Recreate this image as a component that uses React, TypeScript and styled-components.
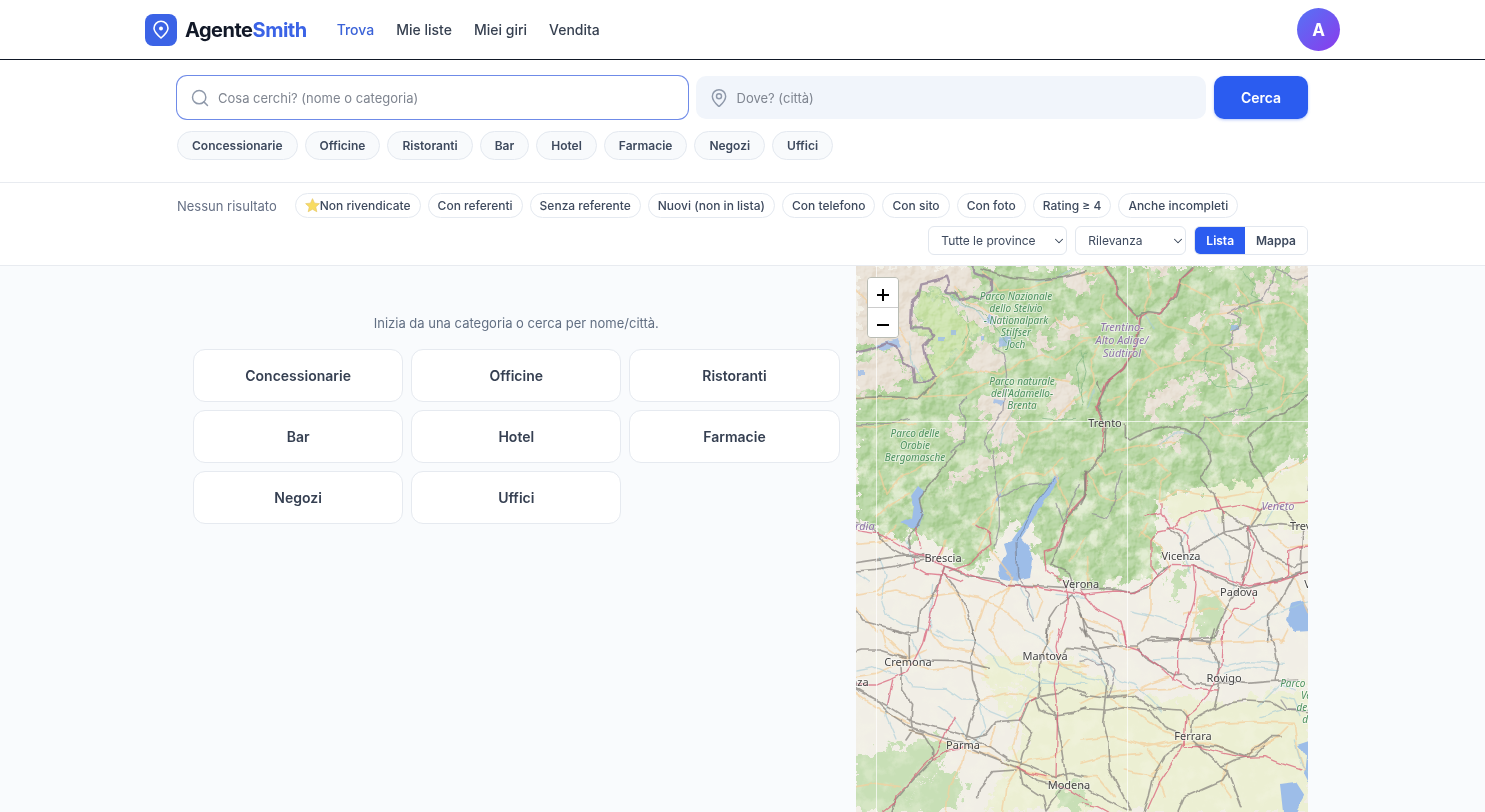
import React from "react";
import styled, { createGlobalStyle, css } from "styled-components";
import { ChevronDown, MapPin, Search } from "lucide-react";

const GlobalStyle = createGlobalStyle`
  *, *::before, *::after { box-sizing: border-box; }
  body {
    margin: 0;
    background: #f9fbfd;
    color: #334155;
    font-family: Inter, "Liberation Sans", sans-serif;
    font-size: 14px;
  }
  button, input, select { font: inherit; color: inherit; }
  button { cursor: pointer; }
`;

const Page = styled.div`
  display: flex;
  flex-direction: column;
  min-height: 100vh;
`;

const Header = styled.header`
  background: #fff;
  border-bottom: 1px solid #111827;
`;

const HeaderInner = styled.div`
  display: flex;
  align-items: center;
  max-width: 1195px;
  height: 59px;
  margin: 0 auto;
`;

const Brand = styled.a`
  display: flex;
  align-items: center;
  gap: 8px;
  margin-right: 30px;
  color: #111827;
  font-size: 20px;
  font-weight: 700;
  letter-spacing: -0.5px;
  text-decoration: none;
`;

const BrandMark = styled.span`
  display: grid;
  place-items: center;
  width: 32px;
  height: 32px;
  border-radius: 8px;
  background: #3b63e6;
  color: #fff;
`;

const BrandAccent = styled.span`
  color: #3b63e6;
`;

const Nav = styled.nav`
  display: flex;
  gap: 22px;
  flex: 1;
`;

const NavLink = styled.a<{ $active?: boolean }>`
  color: ${(p) => (p.$active ? "#3b63d8" : "#374151")};
  font-size: 14px;
  font-weight: 500;
  text-decoration: none;
`;

const Avatar = styled.button`
  width: 43px;
  height: 43px;
  padding: 0;
  border: 0;
  border-radius: 50%;
  background: linear-gradient(135deg, #5573f5, #8b3bec);
  color: #fff;
  font-size: 17px;
  font-weight: 700;
`;

const Section = styled.section`
  background: #fff;
  border-bottom: 1px solid #e8ebf0;
`;

const container = css`
  width: 100%;
  max-width: 1195px;
  margin: 0 auto;
  padding-left: 32px;
  padding-right: 32px;
`;

const SearchInner = styled.div`
  ${container}
  padding-top: 16px;
  padding-bottom: 22px;
`;

const SearchForm = styled.form`
  display: flex;
  gap: 8px;
`;

const Field = styled.label<{ $focused?: boolean }>`
  display: flex;
  flex: 1;
  align-items: center;
  gap: 8px;
  height: 43px;
  padding: 0 13px;
  border-radius: 10px;
  background: ${(p) => (p.$focused ? "#fff" : "#f1f5fb")};
  color: #8f99aa;
  box-shadow: ${(p) => (p.$focused ? "0 0 0 1px #6f8be8" : "none")};
`;

const FieldInput = styled.input`
  flex: 1;
  min-width: 0;
  padding: 0;
  border: 0;
  outline: 0;
  background: transparent;
  color: #334155;
  font-size: 13px;
  &::placeholder { color: #7f8590; opacity: 1; }
`;

const SearchButton = styled.button`
  width: 94px;
  height: 43px;
  border: 0;
  border-radius: 10px;
  background: #2b5cf0;
  color: #fff;
  font-size: 14px;
  font-weight: 600;
  box-shadow: 0 1px 3px rgba(43, 92, 240, 0.35);
`;

const CategoryChips = styled.div`
  display: flex;
  flex-wrap: wrap;
  gap: 7px;
  margin-top: 12px;
`;

const CategoryChip = styled.button`
  height: 29px;
  padding: 0 14px;
  border: 1px solid #e4e9f0;
  border-radius: 15px;
  background: #f8fafc;
  color: #3e4a5e;
  font-size: 12px;
  font-weight: 600;
`;

const FilterInner = styled.div`
  ${container}
  display: flex;
  flex-wrap: wrap;
  align-items: center;
  gap: 8px 18px;
  padding-top: 10px;
  padding-bottom: 10px;
`;

const ResultCount = styled.span`
  color: #667085;
  font-size: 13px;
`;

const FilterChips = styled.div`
  display: flex;
  flex-wrap: wrap;
  gap: 7px;
`;

const FilterChip = styled.button`
  display: flex;
  align-items: center;
  height: 25px;
  padding: 0 9px;
  border: 1px solid #e4e9f0;
  border-radius: 13px;
  background: #fff;
  color: #3e4a5e;
  font-size: 12px;
  font-weight: 500;
`;

const Controls = styled.div`
  display: flex;
  gap: 8px;
  margin-left: auto;
`;

const SelectWrap = styled.span<{ $wide?: boolean }>`
  position: relative;
  width: ${(p) => (p.$wide ? "139px" : "111px")};
  svg {
    position: absolute;
    top: 8px;
    right: 1px;
    pointer-events: none;
  }
`;

const Select = styled.select`
  width: 100%;
  height: 29px;
  padding: 0 12px;
  border: 1px solid #e2e7ee;
  border-radius: 6px;
  background: #fff;
  color: #3e4a5e;
  font-size: 12px;
  appearance: none;
`;

const Toggle = styled.div`
  display: flex;
  height: 29px;
  overflow: hidden;
  border: 1px solid #e2e7ee;
  border-radius: 6px;
`;

const ToggleButton = styled.button<{ $active?: boolean }>`
  padding: 0 11px;
  border: 0;
  background: ${(p) => (p.$active ? "#2b5cf0" : "#fff")};
  color: ${(p) => (p.$active ? "#fff" : "#3e4a5e")};
  font-size: 12px;
  font-weight: 600;
`;

const Main = styled.main`
  ${container}
  display: grid;
  grid-template-columns: 3fr 2fr;
  flex: 1;
`;

const Results = styled.section`
  padding: 48px 16px 32px;
`;

const Hint = styled.p`
  margin: 0 0 16px;
  color: #626f83;
  font-size: 13px;
  line-height: 19px;
  text-align: center;
`;

const CardGrid = styled.div`
  display: grid;
  grid-template-columns: repeat(3, 1fr);
  gap: 8px;
`;

const Card = styled.button`
  height: 53px;
  border: 1px solid #e6eaf0;
  border-radius: 12px;
  background: #fff;
  color: #364052;
  font-size: 14px;
  font-weight: 600;
`;

const MapPanel = styled.section`
  position: relative;
  overflow: hidden;
  background: #f2efe9;
`;

const MapDrawing = styled.svg`
  position: absolute;
  inset: 0;
  width: 100%;
  height: 100%;
`;

const Relief = styled.g`
  mix-blend-mode: soft-light;
  opacity: 0.32;
`;

const ZoomControl = styled.div`
  position: absolute;
  top: 11px;
  left: 11px;
  display: flex;
  flex-direction: column;
  overflow: hidden;
  border: 1px solid #b9bcb4;
  border-radius: 4px;
`;

const ZoomButton = styled.button`
  display: grid;
  place-items: center;
  width: 30px;
  height: 29px;
  padding: 4px 0 0;
  border: 0;
  background: #fff;
  color: #000;
  & + & { height: 30px; border-top: 1px solid #ccc; }
`;

const MapText = styled.text<{ $kind: "city" | "park" | "region" }>`
  font-family: "Noto Sans", "Open Sans", sans-serif;
  font-size: ${(p) => (p.$kind === "park" ? "10px" : "11px")};
  font-style: ${(p) => (p.$kind === "city" ? "normal" : "italic")};
  fill: ${(p) => (p.$kind === "city" ? "#444" : p.$kind === "park" ? "#4d9160" : "#8f76a8")};
  stroke: rgba(255, 255, 255, 0.5);
  stroke-width: 2px;
  paint-order: stroke;
  text-anchor: middle;
`;

const categories = ["Concessionarie", "Officine", "Ristoranti", "Bar", "Hotel", "Farmacie", "Negozi", "Uffici"];
const filters = ["Non rivendicate", "Con referenti", "Senza referente", "Nuovi (non in lista)", "Con telefono", "Con sito", "Con foto", "Rating ≥ 4", "Anche incompleti"];

type Kind = "border" | "rail" | "motorway" | "road" | "river" | "admin" | "park";
const strokes: Record<Kind, { color: string; width: number; opacity: number }> = {
  border: { color: "#95829a", width: 7, opacity: 0.8 },
  rail: { color: "#85807c", width: 5, opacity: 0.7 },
  motorway: { color: "#d9657c", width: 4, opacity: 0.75 },
  road: { color: "#f3cf9c", width: 5, opacity: 0.7 },
  river: { color: "#a9cdd8", width: 4, opacity: 0.6 },
  admin: { color: "#938e98", width: 4, opacity: 0.7 },
  park: { color: "#7fb585", width: 3, opacity: 0.7 },
};

interface Sheet {
  x: number;
  y: number;
  lines: [Kind, string][];
}

/* Each sheet is drawn at three times its size on the map. */
const sheets: Sheet[] = [
  {
    x: 0, y: -1,
    lines: [
      ["road", "M215 385L235 345 300 285 325 255 335 215 330 180M290 335L370 315 440 330 495 290 560 270 600 285 690 225M0 395L90 405 200 395 330 390 420 340"],
      ["road", "M500 560L520 510 570 490 620 435 690 380M0 75L70 150 130 190 160 240M380 20L430 80 520 70 600 40M560 370L590 340 640 350M440 480L480 430 540 420"],
      ["road", "M300 65L330 110 380 130 410 150M0 480L60 490 120 470 180 480M600 160L640 190 690 175"],
      ["park", "M270 80L330 120 380 145 430 200 470 250M320 240L340 200 330 150M560 460L600 465 660 460M690 260L660 300 665 350 680 420"],
      ["river", "M270 75L310 115 360 135 390 175M160 230L170 300 200 340M430 540L440 490 470 440M640 20L600 40 540 50"],
      ["border", "M0 262L45 252 95 232 125 245 142 290 170 310 175 352 215 350 240 330 210 280 203 242 235 212 215 190 165 190 168 110 188 92 196 55 245 45 270 35 278 60 270 80 300 85 310 105 345 95 375 100 405 80 405 45 378 30 355 20 352 0"],
      ["rail", "M375 10L430 28 470 40 550 45 620 38 690 20M0 398L110 395 190 402 235 355"],
      ["admin", "M418 250L445 270 455 330 445 390 440 440 405 490 385 530 400 560M330 395L310 420 330 470 325 530 285 560M0 480L100 475 160 460"],
    ],
  },
  {
    x: 225, y: -1,
    lines: [
      ["road", "M200 20L210 80 190 140M290 50L350 80 390 105M70 90L60 130 90 160M110 420L170 350 240 310 330 285 390 235 360 190 390 150 430 145 490 135M230 160L260 185 320 200 370 210M390 240L440 240 520 240M530 130L545 190 535 250 560 310 610 340 600 400"],
      ["road", "M190 255L240 310M330 285L390 290 430 300 440 360 450 400M430 120L530 120 600 110 640 130 680 180M0 220L60 215 100 240M20 400L40 350 30 280 60 230M370 450L430 510 490 515M460 60L500 100 520 150M560 440L600 420 680 330"],
      ["road", "M100 560L200 540 280 530M0 30L60 20 80 0M80 405L120 395"],
      ["park", "M490 20L520 60 510 90 550 110M380 260L370 320 400 360 480 370 560 355M600 390L690 380M430 450L480 450 560 430M0 260L15 320 0 390"],
      ["river", "M190 150L220 190M40 370L20 430M230 540L290 500 340 510"],
      ["admin", "M585 0L575 50 545 105 480 125 440 145 480 160 475 190 455 200 450 235 415 250 450 275 455 310 500 340 515 390 490 430 430 445 375 460 370 490 350 510 390 560M590 10L650 45 690 30"],
      ["rail", "M72 0L105 50 110 90 170 155 185 145M335 5L300 40 285 90 240 145 200 140 180 150 170 230 130 310 80 350 50 425 75 480 70 560M50 350L60 380M130 480L130 515 150 525 200 500 260 485 310 492 360 520M690 385L610 445 580 450 540 480 500 520 515 560"],
      ["motorway", "M68 0L102 50 106 90 170 160M338 8L295 45 280 90 235 148 200 145 176 160 166 235 125 315 75 355 47 425 70 480 60 560"],
    ],
  },
  {
    x: 0, y: 185,
    lines: [
      ["road", "M70 60L90 130 130 80 180 60 210 40M0 280L60 275 120 265M60 200L100 160 160 130M350 220L400 170 420 140 460 90 500 65 560 70 600 40 620 20M270 270L250 330M510 540L450 480 370 440 300 425 200 440 120 420 60 430M530 400L560 450 540 500M400 540L470 380 400 290M270 390L310 440 340 540M120 220L70 280"],
      ["road", "M0 430L60 420 100 390 150 370M590 50L620 130 650 190M0 470L60 540M420 150L400 230 370 300M360 540L390 450 470 400M690 260L640 330"],
      ["river", "M70 320L90 370 75 440 90 490 140 520 200 530 260 560M480 390L500 430 520 450 535 510M150 270L170 330M230 400L220 540M690 440L600 430M0 360L40 390"],
      ["admin", "M410 0L415 50 420 120 430 140 460 125 500 105 590 95M430 140L430 230 415 285M480 275L485 380 520 430 515 480 535 510M670 100L640 170 620 210 600 160"],
      ["rail", "M300 0L260 50 230 90 190 140 200 190 180 230 155 260 160 295M0 215L50 230 100 290 150 315 210 318M0 335L100 320 200 310M0 360L60 355 120 345 200 325M690 60L685 140 630 200 610 280 585 340 640 365 655 420M265 345L340 375 380 380 420 385 450 400 560 405 630 410M265 350L240 420 190 480 185 540 150 545 20 510 0 475M265 370L310 430 330 470 360 570M650 430L600 470 580 500 570 570M650 430L680 500 690 560"],
      ["motorway", "M0 235L60 245 110 270 160 300 210 318 240 335 310 360 380 385 450 400 540 408 690 432M175 320L175 350 210 370 260 375M265 345L250 400 225 490 205 570M690 65L690 130 635 190 600 290 565 300 570 360 620 390 635 430 630 500 610 560M255 360L270 375 310 390 320 385M360 220L400 245 405 280 380 300 340 340 280 360M260 290L240 330M180 230L195 290"],
    ],
  },
  {
    x: 225, y: 185,
    lines: [
      ["road", "M20 60L60 140 100 150 150 120 190 130M235 150L240 90 270 65M235 150L290 120 420 140 540 120 600 60 690 20M0 30L40 20 70 70 100 60M130 40L190 40 220 20 260 60M170 260L200 220M360 380L470 510 550 540M560 330L580 370 560 410 610 470M210 370L210 480 180 540M430 340L500 330 540 380M20 320L20 400M560 240L620 290 690 280M510 220L550 120"],
      ["road", "M690 500L640 380 590 330M310 490L410 470M0 500L60 520 130 550M270 360L240 290 180 240M410 420L350 440 330 570"],
      ["river", "M370 190L400 250 440 300 460 410M330 210L300 280 330 370M470 560L540 500 690 450M150 480L240 500 310 530M320 310L400 350M580 170L550 220M560 570L560 510"],
      ["admin", "M120 60L100 150 80 205 30 190M690 60L680 120"],
      ["rail", "M65 0L45 40 10 70 15 130 0 160M385 0L390 30 360 80 400 130 410 170 500 230 515 240 550 300 640 350M505 0L510 30 550 80 580 150 640 210M325 300L370 275 430 240 500 228 600 218 660 225M425 180L430 245 505 295 480 410M550 170L500 240 505 295M0 415L50 412 100 415 150 425 200 410 240 360 260 345M340 345L410 380 460 400 500 412 560 395 640 375 690 360M500 412L660 365 665 240M640 350L650 340 690 335M470 420L430 480 400 560 200 568M260 230L300 260 310 320M0 490L20 530 90 550 110 570M640 375L600 450 560 490 560 570M0 530L20 560"],
      ["motorway", "M0 430L100 420 160 425 240 370 270 343 340 345 400 370 500 405 600 390 690 360M195 195L240 185 270 230 320 250 325 300M230 375L210 350 210 270 230 240 280 230 300 205 360 180 420 170 480 160 540 180 600 155 690 150M240 155L240 185M340 345L345 400 340 450 300 570M405 140L430 190M500 230L520 270 500 360 480 400M600 390L620 370 620 300 650 288 690 285M510 415L520 455 490 475 460 475 430 520 420 570M0 420L40 470 120 510 135 570"],
    ],
  },
  {
    x: 0, y: 364,
    lines: [
      ["road", "M0 140L60 130 130 100 210 60M70 0L150 80 160 100M400 0L430 50 460 100 520 100M160 100L230 120 320 110 400 140M330 350L320 400 280 470 270 546M420 290L400 350 350 350 320 320M490 280L470 350 490 410 450 470 440 546M0 190L70 240 160 280M370 210L450 190 540 200M610 90L640 120 690 130M480 410L520 390 600 380 640 330M500 420L570 440 620 440M80 0L90 50 150 90"],
      ["road", "M160 300L230 320 320 360 390 370 490 420 600 455M0 470L60 460 130 470M590 0L560 70 580 100 690 110M220 0L260 50 350 65 390 120"],
      ["river", "M0 120L50 110 90 125 150 140 170 170 230 175 270 175 320 210 365 212 400 245 450 265 490 240 520 190M100 190L90 260 120 330M240 0L290 30 360 35 410 80 430 110 490 130 560 160 690 160M510 0L550 20 580 60 620 110 690 140M170 30L200 100M520 190L560 150 600 160M250 230L290 260 330 320M370 215L390 300 350 340"],
      ["rail", "M160 90L160 15 110 0M0 65L20 60 70 60 150 85M200 90L310 92 400 115M350 0L360 40 345 80 350 150 370 205 340 280 330 330M135 110L140 180 170 220 165 270 170 300 150 330M0 175L50 205 100 230 170 275 270 300 340 320 400 350 460 390 520 408 600 443M0 180L60 210 100 250 160 290 230 315 320 340 400 380 490 415 540 450 600 463M160 300L200 310 230 360 230 390 180 440 145 480 115 515 105 546M330 330L390 315 420 275 495 270 520 210 550 200 600 255 620 360 633 450M575 0L570 50 550 100 550 200 610 190 640 170 690 190M490 270L530 310 500 370 490 410 500 460 560 500 570 540 600 500 620 470M365 500L370 475 410 425 480 420M600 443L640 430 690 440M610 80L630 55 690 60M540 210L550 240 600 258 650 250 690 230"],
      ["motorway", "M210 0L200 40 175 90 150 125 100 150 60 165 0 165M110 150L95 220M300 262L270 300 240 370 200 410 150 470 120 500 115 520 80 546M610 0L600 50 610 100 595 160 605 250 600 440M600 465L640 480 690 510M480 410L520 430 570 440M230 390L270 365 320 355M490 270L510 220 540 200"],
    ],
  },
  {
    x: 225, y: 364,
    lines: [
      ["road", "M0 220L60 190 130 180 280 175 310 170M340 40L500 35 610 30M0 330L100 320 200 350 290 330M340 290L420 280 520 275 640 280M90 210L170 250 240 300 300 320M0 400L70 380 180 370M200 360L240 410 210 430M180 340L250 350 300 330M500 380L520 350 600 320M640 280L650 360 670 420M130 200L210 160 270 140M0 100L20 110"],
      ["road", "M10 440L50 440 100 500M300 340L390 340 460 370M440 400L420 460 450 500M330 290L310 240M130 420L230 440 250 500M500 370L580 330 620 290M70 40L140 60 170 50M620 0L600 40"],
      ["river", "M0 75L30 90 70 110 80 140M30 60L90 110 110 150 160 165 210 210 240 245M0 140L60 150 80 180M170 60L210 90 310 85 380 90 440 110 500 95 610 100M530 230L580 180 600 160 640 180M110 0L120 40M600 200L640 210 660 260M430 130L500 110 590 120M640 330L660 400 690 440M540 260L600 240"],
      ["rail", "M10 0L50 60 80 135 65 280 80 340 85 420 150 540M0 50L50 58 120 48 170 48 210 20 320 28 390 35M170 55L190 80 240 110 280 135 310 130 340 160 400 165 430 155 500 160 560 155 650 150M400 0L385 45 410 100 415 165 400 235 335 270 330 310M0 195L80 205 160 200 220 235 300 240 320 265M0 235L80 240 130 230 210 240 250 290 300 310M80 200L140 195M300 340L250 380 220 430 205 500 190 546M330 330L440 425 480 530M340 345L410 350 490 380 530 350 570 320 600 320M440 425L425 450 310 500 290 546M400 240L450 215 500 210 570 215 610 240 690 245M0 460L40 490 140 540M440 420L420 410 460 390 520 375 550 345M560 0L580 40 590 100 580 150"],
      ["admin", "M80 205L105 120 80 100 50 105 20 90 0 95M600 210L620 240 650 240"],
      ["motorway", "M130 0L135 50 170 60 230 105 280 150 330 175 410 180M305 0L290 70 290 130M425 0L420 110 385 190 340 240 315 260 310 330 300 360 240 450 200 540M310 330L310 350 350 350 430 370 490 382 550 380 600 400 660 420M0 518L50 530 80 546M275 150L285 125"],
    ],
  },
];

const mountains =
  "M0 0H454V190L430 196 405 215 365 222 330 225 305 232 300 250 298 270 306 300 290 312 250 318 225 322 200 308 180 290 178 262 160 255 148 268 128 300 100 302 88 282 70 270 40 272 0 250Z";
const clearings = [
  "M0 0H110L125 22 110 30 90 22 62 25 58 62 72 72 70 100 55 112 45 90 20 82 0 72Z",
  "M0 95L35 84 48 100 54 112 30 125 0 130Z",
  "M80 25L120 38 145 50 140 65 115 55Z",
  "M120 72L140 80 148 100 130 106 110 102 118 90Z",
  "M128 130L150 122 155 150 170 175 150 172 140 190 130 150 118 142Z",
  "M195 60L215 48 230 62 215 76 200 70Z",
  "M200 120L215 106 222 125 212 145 200 150 190 140Z",
  "M205 10L225 2 230 22 218 30Z",
  "M168 73L195 70 198 83 178 86Z",
  "M93 155L105 150 108 178 96 172Z",
  "M120 195L150 186 158 178 160 187 145 200 118 208 100 215 92 222 98 208 112 205Z",
  "M295 0L318 0 312 10 298 8Z",
  "M290 135L310 120 330 112 352 102 360 110 335 120 322 132 342 128 340 142 325 148 328 132 305 140 300 155 288 152Z",
  "M320 80L335 73 334 85 320 96 316 84Z",
  "M332 52L348 45 350 60 338 68Z",
  "M395 15L415 8 425 20 418 36 405 32Z",
  "M365 40L380 30 388 42 375 56 363 48Z",
  "M376 60L392 58 388 80 368 82 378 70Z",
  "M375 95L395 98 400 112 385 120 370 108Z",
  "M408 80L420 70 418 92 410 90Z",
  "M428 0L454 0 454 20 438 22 432 14Z",
  "M308 170L322 165 325 178 310 185Z",
  "M225 20L240 8 236 30Z",
  "M375 145L390 150 385 160 375 155Z",
];
const woods = [
  "M0 490L30 482 60 478 85 470 98 480 80 505 60 520 50 546 0 546Z",
  "M315 305L330 300 332 320 318 335 310 325Z",
  "M342 330L365 332 368 350 360 370 342 372Z",
  "M200 525L225 515 230 540 205 546Z",
  "M60 520L90 500 110 515 100 546 50 546Z",
];
const greenFields = [
  "M130 420L160 430 180 395 210 390 240 412 270 425 310 435 345 430 370 440 410 425 454 420V546H130L150 500 170 470Z",
  "M305 232L360 222 405 215 454 190V270L400 255 350 250 320 262Z",
  "M125 396L150 388 172 400 165 420 145 425 128 412Z",
];
const lakes = [
  "M200 208L203 212 198 222 188 235 177 255 165 272 172 280 177 294 174 312 160 315 144 312 143 300 150 288 147 278 156 274 166 260 180 238Z",
  "M62 220L68 225 63 235 68 248 62 262 54 262 44 257 56 252 58 240 55 230Z",
  "M435 337L447 334 454 345V365L438 366 430 355Z",
  "M424 518L440 516 449 530 440 546H427Z",
  "M442 479L454 475V520L448 508 450 490Z",
  "M144 224L146 221 144 233 138 238Z",
];
const pools = "M20 78l22-6 4 8-20 5zM142 72l12-4 2 10-12 2zM83 71h5v4h-5zM95 64h6v5h-6zM124 70h4v4h-4zM2 104h6v6h-6zM132 48l5 3-2 7-6-3zM137 132l12 2-4 5-9-3zM375 60h9v4h-9z";

const labels: { kind: "city" | "park" | "region"; x: number; y: number; lines: string[]; step?: number }[] = [
  { kind: "park", x: 160, y: 34, lines: ["Parco Nazionale", "dello Stelvio", "- Nationalpark", "Stilfser", "Joch"] },
  { kind: "park", x: 166, y: 119, lines: ["Parco naturale", "dell'Adamello-", "Brenta"] },
  { kind: "park", x: 59, y: 171, lines: ["Parco delle", "Orobie", "Bergomasche"] },
  { kind: "park", x: 460, y: 421, lines: ["Parco Regionale", "Veneto", "del Delta", "del Po"] },
  { kind: "region", x: 266, y: 65, lines: ["Trentino-", "Alto Adige/", "Südtirol"], step: 13 },
  { kind: "region", x: 422, y: 244, lines: ["Veneto"] },
  { kind: "region", x: -8, y: 264, lines: ["Lombardia"] },
  { kind: "city", x: 249, y: 161, lines: ["Trento"] },
  { kind: "city", x: 87, y: 296, lines: ["Brescia"] },
  { kind: "city", x: 225, y: 322, lines: ["Verona"] },
  { kind: "city", x: 325, y: 294, lines: ["Vicenza"] },
  { kind: "city", x: 383, y: 330, lines: ["Padova"] },
  { kind: "city", x: 452, y: 264, lines: ["Treviso"] },
  { kind: "city", x: 468, y: 322, lines: ["Venezia"] },
  { kind: "city", x: 52, y: 400, lines: ["Cremona"] },
  { kind: "city", x: 189, y: 394, lines: ["Mantova"] },
  { kind: "city", x: 368, y: 416, lines: ["Rovigo"] },
  { kind: "city", x: -10, y: 420, lines: ["Piacenza"] },
  { kind: "city", x: 107, y: 483, lines: ["Parma"] },
  { kind: "city", x: 337, y: 474, lines: ["Ferrara"] },
  { kind: "city", x: 213, y: 523, lines: ["Modena"] },
];

function AreaMap() {
  return (
    <MapDrawing viewBox="0 0 454 546" preserveAspectRatio="xMinYMin slice" role="img" aria-label="Mappa del Nord Italia">
      <defs>
        <filter id="ragged" x="-5%" y="-5%" width="110%" height="110%">
          <feTurbulence type="fractalNoise" baseFrequency="0.1" numOctaves="4" seed="4" />
          <feDisplacementMap in="SourceGraphic" scale="26" xChannelSelector="R" yChannelSelector="G" />
          <feGaussianBlur stdDeviation="0.6" />
        </filter>
        <filter id="jitter" x="-5%" y="-5%" width="110%" height="110%">
          <feTurbulence type="fractalNoise" baseFrequency="0.07" numOctaves="2" seed="9" />
          <feDisplacementMap in="SourceGraphic" scale="5" xChannelSelector="R" yChannelSelector="G" />
          <feGaussianBlur stdDeviation="0.3" />
        </filter>
        <filter id="valleys" x="0" y="0" width="100%" height="100%">
          <feTurbulence type="fractalNoise" baseFrequency="0.06" numOctaves="5" seed="12" />
          <feColorMatrix values="0 0 0 0 0.92  0 0 0 0 0.93  0 0 0 0 0.80  4 0 0 0 -1.9" />
          <feComposite in2="SourceGraphic" operator="in" />
        </filter>
        <filter id="relief" x="0" y="0" width="100%" height="100%" colorInterpolationFilters="sRGB">
          <feTurbulence type="fractalNoise" baseFrequency="0.07" numOctaves="4" seed="21" />
          <feDiffuseLighting surfaceScale="7" lightingColor="#ffffff" result="light">
            <feDistantLight azimuth="225" elevation="40" />
          </feDiffuseLighting>
          <feComposite in2="SourceGraphic" operator="in" />
        </filter>
      </defs>
      <rect width="454" height="546" fill="#f1eee6" />
      <g filter="url(#ragged)">
        {greenFields.map((d) => <path key={d} d={d} fill="#ecefd3" />)}
        <path d={mountains} fill="#b6d5a2" />
        {woods.map((d) => <path key={d} d={d} fill="#c8dfb6" />)}
      </g>
      <path d={mountains} filter="url(#valleys)" opacity="0.5" />
      <rect y="200" width="454" height="346" filter="url(#valleys)" opacity="0.3" />
      <g filter="url(#ragged)">
        {clearings.map((d) => <path key={d} d={d} fill="#e9e1d6" />)}
        <path d="M62 28L78 28 100 45 125 62 110 78 95 90 80 115 60 112 72 90 76 72 62 62Z" fill="#cde3ae" />
      </g>
      <Relief>
        <path d={mountains} filter="url(#relief)" />
      </Relief>
      <g filter="url(#jitter)" fill="#9dbde8">
        {lakes.map((d) => <path key={d} d={d} />)}
        <path d={pools} opacity="0.8" />
      </g>
      <g fill="none" strokeLinejoin="round" strokeLinecap="round" filter="url(#jitter)">
        {sheets.map((s) => (
          <g key={`${s.x}-${s.y}`} transform={`translate(${s.x} ${s.y}) scale(0.3333)`}>
            {s.lines.map(([kind, d]) => (
              <path key={d} d={d} stroke={strokes[kind].color} strokeWidth={strokes[kind].width} opacity={strokes[kind].opacity} />
            ))}
          </g>
        ))}
        <path d="M199 212L178 240 161 277 162 312" stroke="#7b93b3" />
      </g>
      <path d="M20.500 0V546M271.500 0V546M0 155.500H454" stroke="#fff" opacity="0.7" fill="none" />
      {labels.map((l) => (
        <MapText key={l.lines[0] + l.x} $kind={l.kind}>
          {l.lines.map((line, i) => (
            <tspan key={line} x={l.x} y={l.y + i * (l.step ?? 12)}>{line}</tspan>
          ))}
        </MapText>
      ))}
    </MapDrawing>
  );
}

const StarIcon = () => (
  <svg width="15" height="15" viewBox="0 0 24 24" aria-hidden="true">
    <path d="M12 1l3.200 7.200 7.800.8-5.800 5.300 1.700 7.700L12 18l-6.900 4 1.700-7.700L1 9l7.800-.8z" fill="#f8dc62" stroke="#e6c662" strokeLinejoin="round" />
  </svg>
);

const BrandPin = () => (
  <svg width="18" height="20" viewBox="0 0 18 20" fill="none" aria-hidden="true">
    <path d="M9 18C6 15.500 2 11.800 2 8.300a7 7 0 0 1 14 0C16 11.800 12 15.500 9 18z" stroke="#fff" strokeWidth="1.600" />
    <circle cx="9" cy="8.500" r="2" fill="#fff" />
  </svg>
);

export default function App() {
  return (
    <Page>
      <GlobalStyle />
      <Header>
        <HeaderInner>
          <Brand href="#">
            <BrandMark><BrandPin /></BrandMark>
            <span>Agente<BrandAccent>Smith</BrandAccent></span>
          </Brand>
          <Nav>
            <NavLink href="#trova" $active>Trova</NavLink>
            <NavLink href="#liste">Mie liste</NavLink>
            <NavLink href="#giri">Miei giri</NavLink>
            <NavLink href="#vendita">Vendita</NavLink>
          </Nav>
          <Avatar type="button">A</Avatar>
        </HeaderInner>
      </Header>

      <Section>
        <SearchInner>
          <SearchForm onSubmit={(e) => e.preventDefault()}>
            <Field $focused>
              <Search size={20} strokeWidth={1.75} aria-hidden />
              <FieldInput aria-label="Cosa cerchi?" placeholder="Cosa cerchi? (nome o categoria)" />
            </Field>
            <Field>
              <MapPin size={20} strokeWidth={1.75} aria-hidden />
              <FieldInput aria-label="Dove?" placeholder="Dove? (città)" />
            </Field>
            <SearchButton type="submit">Cerca</SearchButton>
          </SearchForm>
          <CategoryChips>
            {categories.map((c) => <CategoryChip key={c} type="button">{c}</CategoryChip>)}
          </CategoryChips>
        </SearchInner>
      </Section>

      <Section>
        <FilterInner>
          <ResultCount>Nessun risultato</ResultCount>
          <FilterChips>
            {filters.map((f, i) => (
              <FilterChip key={f} type="button">{i === 0 && <StarIcon />}{f}</FilterChip>
            ))}
          </FilterChips>
          <Controls>
            <SelectWrap $wide>
              <Select aria-label="Provincia"><option>Tutte le province</option></Select>
              <ChevronDown size={14} strokeWidth={1.75} aria-hidden />
            </SelectWrap>
            <SelectWrap>
              <Select aria-label="Ordinamento"><option>Rilevanza</option></Select>
              <ChevronDown size={14} strokeWidth={1.75} aria-hidden />
            </SelectWrap>
            <Toggle>
              <ToggleButton type="button" $active>Lista</ToggleButton>
              <ToggleButton type="button">Mappa</ToggleButton>
            </Toggle>
          </Controls>
        </FilterInner>
      </Section>

      <Main>
        <Results>
          <Hint>Inizia da una categoria o cerca per nome/città.</Hint>
          <CardGrid>
            {categories.map((c) => <Card key={c} type="button">{c}</Card>)}
          </CardGrid>
        </Results>
        <MapPanel>
          <AreaMap />
          <ZoomControl>
            <ZoomButton type="button" aria-label="Ingrandisci">
              <svg width="12" height="12" viewBox="0 0 12 12" stroke="#000" strokeWidth="2"><path d="M6 0v12M0 6h12" /></svg>
            </ZoomButton>
            <ZoomButton type="button" aria-label="Riduci">
              <svg width="12" height="12" viewBox="0 0 12 12" stroke="#000" strokeWidth="2"><path d="M0 6h12" /></svg>
            </ZoomButton>
          </ZoomControl>
        </MapPanel>
      </Main>
    </Page>
  );
}
